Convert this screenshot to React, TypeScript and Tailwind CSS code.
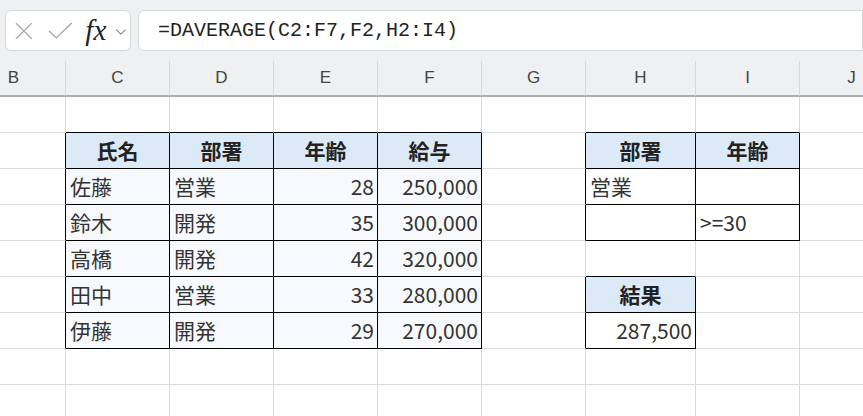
import { ChevronDown } from "lucide-react";

type Kind = "head" | "data" | "plain";
type Cell = { text: string; kind: Kind; align?: "left" | "right" | "center" };

const columns = ["B", "C", "D", "E", "F", "G", "H", "I", "J"];
const rows = [1, 2, 3, 4, 5, 6, 7, 8, 9];

const people: [string, string, string, string][] = [
  ["佐藤", "営業", "28", "250,000"],
  ["鈴木", "開発", "35", "300,000"],
  ["高橋", "開発", "42", "320,000"],
  ["田中", "営業", "33", "280,000"],
  ["伊藤", "開発", "29", "270,000"],
];

const cells: Record<string, Cell> = {
  C2: { text: "氏名", kind: "head" },
  D2: { text: "部署", kind: "head" },
  E2: { text: "年齢", kind: "head" },
  F2: { text: "給与", kind: "head" },
  H2: { text: "部署", kind: "head" },
  I2: { text: "年齢", kind: "head" },
  H3: { text: "営業", kind: "plain", align: "left" },
  I3: { text: "", kind: "plain" },
  H4: { text: "", kind: "plain" },
  I4: { text: ">=30", kind: "plain", align: "left" },
  H6: { text: "結果", kind: "head" },
  H7: { text: "287,500", kind: "plain", align: "right" },
};

people.forEach(([name, dept, age, pay], i) => {
  const r = i + 3;
  cells[`C${r}`] = { text: name, kind: "data", align: "left" };
  cells[`D${r}`] = { text: dept, kind: "data", align: "left" };
  cells[`E${r}`] = { text: age, kind: "data", align: "right" };
  cells[`F${r}`] = { text: pay, kind: "data", align: "right" };
});

function inTable(ci: number, r: number) {
  return Boolean(cells[`${columns[ci]}${r}`]);
}

function Sheet() {
  return (
    <div className="-ml-[38px] grid grid-cols-[104px_104px_104px_104px_104px_104px_110px_104px_104px]">
      {columns.map((c) => (
        <div
          key={c}
          className="flex h-[36px] items-center justify-center border-r border-b-2 border-r-[#d6d8da] border-b-[#acacac] bg-[#eef0f1] text-[17px] text-[#444] font-['Liberation_Sans',sans-serif]"
        >
          {c}
        </div>
      ))}
      {rows.map((r) =>
        columns.map((c, ci) => {
          const cell = cells[`${c}${r}`];
          const rightBlack = inTable(ci, r) || inTable(ci + 1, r);
          const bottomBlack = inTable(ci, r) || inTable(ci, r + 1);
          const bg =
            cell?.kind === "head"
              ? "bg-[#dce9f7]"
              : cell?.kind === "data"
                ? "bg-[#f7f9fc]"
                : "bg-white";
          const align =
            cell?.align === "left"
              ? "justify-start pl-[4px]"
              : cell?.align === "right"
                ? "justify-end pr-[3px]"
                : "justify-center";
          return (
            <div
              key={`${c}${r}`}
              className={`flex h-[36px] items-center border-r border-b ${
                rightBlack ? "border-r-black" : "border-r-[#dadada]"
              } ${bottomBlack ? "border-b-black" : "border-b-[#dadada]"} ${bg} ${align} ${
                cell?.kind === "head" ? "font-bold text-[#222]" : "text-[#333]"
              } text-[21px] leading-none`}
            >
              {cell?.text}
            </div>
          );
        })
      )}
    </div>
  );
}

export default function App() {
  return (
    <div className="h-[416px] w-[863px] overflow-hidden bg-white font-['Noto_Sans_CJK_JP',sans-serif]">
      <div className="flex h-[61px] items-start bg-[#eef0f1] pt-[10px]">
        <div className="ml-[5px] flex h-[41px] w-[126px] items-center rounded-md border border-[#d4d6d8] bg-white">
          <svg width="18" height="18" viewBox="0 0 18 18" className="ml-[9px]">
            <path d="M1 1L17 17M17 1L1 17" stroke="#a4a4a4" strokeWidth="1.4" fill="none" />
          </svg>
          <svg width="26" height="18" viewBox="0 0 26 18" className="ml-[15px]">
            <path d="M1 9L8.5 16L24 1" stroke="#a4a4a4" strokeWidth="1.4" fill="none" />
          </svg>
          <span className="ml-[12px] font-['Liberation_Serif',serif] text-[29px] italic leading-none text-[#222]">
            fx
          </span>
          <ChevronDown size={18} strokeWidth={1.5} className="ml-[6px] mt-[2px] text-[#888]" />
        </div>
        <div className="ml-[7px] flex h-[41px] w-[760px] items-center rounded-l-md border border-[#d4d6d8] bg-white pl-[19px] font-['Liberation_Mono',monospace] text-[20px] text-[#222]">
          =DAVERAGE(C2:F7,F2,H2:I4)
        </div>
      </div>
      <Sheet />
    </div>
  );
}
